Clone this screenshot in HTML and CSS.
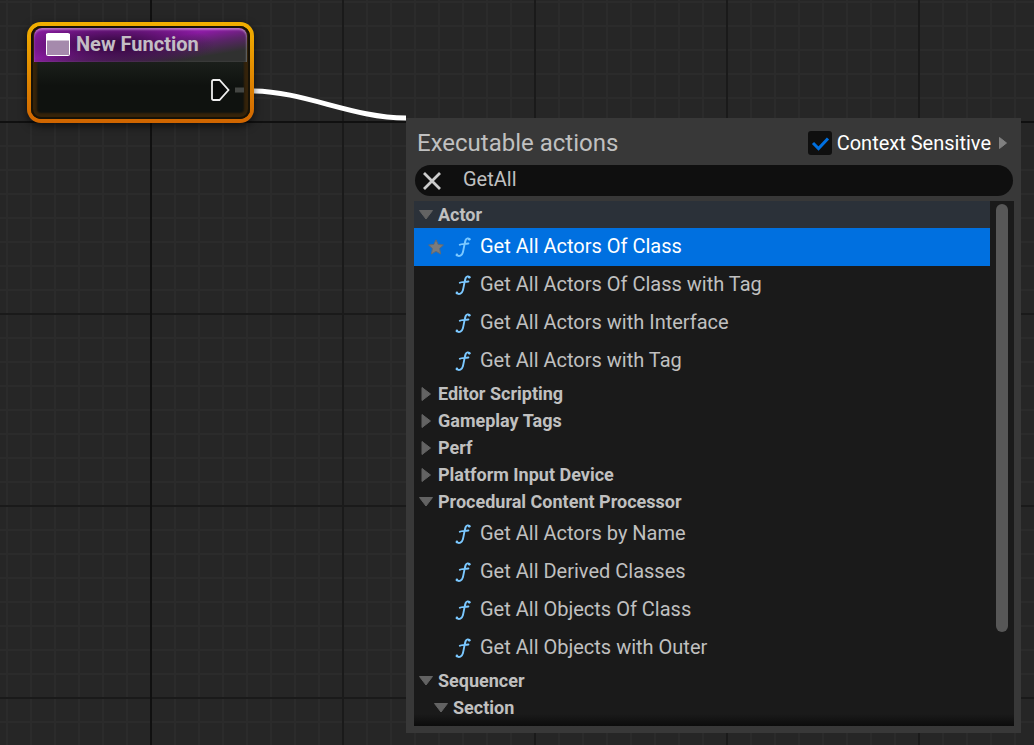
FILE: index.html
```html
<!DOCTYPE html>
<html lang="en">
<head>
<meta charset="utf-8">
<title>Blueprint Graph</title>
<link rel="stylesheet" href="styles.css">
</head>
<body>
<svg class="defs" aria-hidden="true">
  <symbol id="fn" viewBox="0 0 16 22">
    <path d="M14.500 3.2C13.400 1.900 11.500 2.200 10.700 4C9.600 6.500 8.900 12.500 7.900 16.200C7 19.500 4.200 20.800 1.800 19.300M4.800 8.800C6.500 7.700 9 8.100 13.400 7.500" fill="none" stroke="currentColor" stroke-width="1.900" stroke-linecap="round"/>
    <circle cx="14.2" cy="3.2" r="1.3" fill="currentColor"/>
    <circle cx="1.9" cy="18.9" r="1.3" fill="currentColor"/>
  </symbol>
  <symbol id="open" viewBox="0 0 16 12">
    <path d="M1.500 1.500H14.500L8 10Z" fill="currentColor" stroke="currentColor" stroke-linejoin="round"/>
  </symbol>
  <symbol id="closed" viewBox="0 0 16 16">
    <path d="M4 1.500V14.500L12.500 8Z" fill="currentColor" stroke="currentColor" stroke-linejoin="round"/>
  </symbol>
</svg>
<main class="graph">
  <svg class="wire" width="154" height="36" viewBox="0 0 154 36" aria-hidden="true">
    <path d="M0 5C52 5 100 32 154 32" fill="none" stroke="#fff" stroke-width="5"/>
  </svg>
  <article class="node">
    <div class="node-body">
      <header class="node-title">
        <svg width="24" height="23" viewBox="0 0 24 23" aria-hidden="true">
          <rect x="0.5" y="0.5" width="23" height="22" rx="1" fill="#a58aac" stroke="#fff"/>
          <path d="M0 1H24V7.500H0Z" fill="#fff"/>
        </svg>
        <h1>New Function</h1>
      </header>
      <div class="pins">
        <svg width="36" height="24" viewBox="0 0 36 24" aria-hidden="true">
          <path d="M2 3.500Q2 2 3.500 2H9.500L18.500 12L9.500 22H3.500Q2 22 2 20.500Z" fill="#080a09" stroke="#eee" stroke-width="1.800"/>
          <path d="M25 9.500H34V14.500H25Z" fill="#444643"/>
        </svg>
      </div>
    </div>
  </article>

  <section class="menu">
    <header class="menu-head">
      <h2>Executable actions</h2>
      <label class="context">
        <span class="check">
          <input type="checkbox" checked>
          <svg width="24" height="24" viewBox="0 0 24 24" aria-hidden="true"><path d="M5 12L10.500 17.500L20 7.500" fill="none" stroke="#0070e0" stroke-width="3"/></svg>
        </span>
        Context Sensitive
      </label>
      <button class="more" type="button" aria-label="Context options">
        <svg width="10" height="14" viewBox="0 0 10 14" aria-hidden="true"><path d="M1.500 1.500V12.500L8.500 7Z" fill="#808080" stroke="#808080" stroke-linejoin="round"/></svg>
      </button>
    </header>
    <div class="search">
      <button type="button" aria-label="Clear search">
        <svg width="20" height="20" viewBox="0 0 20 20" aria-hidden="true"><path d="M2 2L18 18M18 2L2 18" stroke="#ccc" stroke-width="2.800"/></svg>
      </button>
      <input type="text" value="GetAll" aria-label="Search actions">
    </div>
    <div class="results">
      <div class="tree">
        <button class="category current" type="button"><svg><use href="#open"/></svg>Actor</button>
        <button class="action selected" type="button">
          <svg class="star" viewBox="0 0 16 16" aria-hidden="true"><path d="M8 0.800L10.200 5.400L15.400 6L11.600 9.500L12.600 15L8 12.300L3.400 15L4.400 9.500L0.600 6L5.800 5.400Z" fill="#7b7b7b" stroke="#5f6b78" stroke-linejoin="round"/></svg>
          <svg class="fn"><use href="#fn"/></svg>Get All Actors Of Class</button>
        <button class="action" type="button"><svg class="fn"><use href="#fn"/></svg>Get All Actors Of Class with Tag</button>
        <button class="action" type="button"><svg class="fn"><use href="#fn"/></svg>Get All Actors with Interface</button>
        <button class="action" type="button"><svg class="fn"><use href="#fn"/></svg>Get All Actors with Tag</button>
        <button class="category" type="button"><svg><use href="#closed"/></svg>Editor Scripting</button>
        <button class="category" type="button"><svg><use href="#closed"/></svg>Gameplay Tags</button>
        <button class="category" type="button"><svg><use href="#closed"/></svg>Perf</button>
        <button class="category" type="button"><svg><use href="#closed"/></svg>Platform Input Device</button>
        <button class="category" type="button"><svg><use href="#open"/></svg>Procedural Content Processor</button>
        <button class="action" type="button"><svg class="fn"><use href="#fn"/></svg>Get All Actors by Name</button>
        <button class="action" type="button"><svg class="fn"><use href="#fn"/></svg>Get All Derived Classes</button>
        <button class="action" type="button"><svg class="fn"><use href="#fn"/></svg>Get All Objects Of Class</button>
        <button class="action" type="button"><svg class="fn"><use href="#fn"/></svg>Get All Objects with Outer</button>
        <button class="category" type="button"><svg><use href="#open"/></svg>Sequencer</button>
        <button class="category nested" type="button"><svg><use href="#open"/></svg>Section</button>
      </div>
      <div class="scrollbar"><div class="thumb"></div></div>
    </div>
  </section>
</main>
</body>
</html>
```
FILE: styles.css
```css
* { box-sizing: border-box; }

body {
  margin: 0;
  font-family: Roboto, "Liberation Sans", sans-serif;
  color: #c0c0c0;
}

h1, h2 { margin: 0; }

svg { display: block; flex: none; }

button, input {
  font: inherit;
  color: inherit;
  border: 0;
  padding: 0;
  margin: 0;
  background: none;
}

.defs { position: absolute; width: 0; height: 0; }

.graph {
  position: relative;
  min-height: 100vh;
  overflow: hidden;
  background-color: #262626;
  background-image:
    linear-gradient(90deg, #101010 2px, transparent 2px),
    linear-gradient(#101010 2px, transparent 2px),
    linear-gradient(90deg, #1a1a1a 2px, transparent 2px),
    linear-gradient(#1a1a1a 2px, transparent 2px),
    linear-gradient(90deg, #2b2b2b 2px, transparent 2px),
    linear-gradient(#2b2b2b 2px, transparent 2px);
  background-size: 2px 100%, 100% 2px, 192px 192px, 192px 192px, 24px 24px, 24px 24px;
  background-position: 150px 0, 0 121px, 150px 121px, 150px 121px, 6px 1px, 6px 1px;
  background-repeat: no-repeat, no-repeat, repeat, repeat, repeat, repeat;
}

.wire { position: absolute; left: 252px; top: 86px; }

.node {
  position: absolute;
  left: 27px;
  top: 22px;
  width: 227px;
  padding: 4px;
  border-radius: 14px;
  background: linear-gradient(#f2b000, #d06500);
  box-shadow: 0 3px 8px #0009;
}

.node-body {
  height: 93px;
  padding: 2px 3px;
  border-radius: 10px;
  background: linear-gradient(#1c201c 34px, #0f120f 60px);
  box-shadow: inset 0 0 0 2px #171207, inset 0 0 2px 6px #35230a;
  overflow: hidden;
}

.node-title {
  display: flex;
  align-items: center;
  gap: 6px;
  height: 34px;
  padding: 0 12px 1px;
  border-radius: 8px 8px 0 0;
  background:
    radial-gradient(ellipse 100px 24px at 38% 50%, #380a44 15%, transparent),
    linear-gradient(to bottom right, #8c1ba4 45%, #5a2468 62%, #303130 82%);
  box-shadow: inset 0 2px 2px #ffffff58, inset -1px 0 2px #ffffff30;
}

.node-title h1 {
  padding-bottom: 1px;
  font-size: 20px;
  line-height: 24px;
  font-weight: 700;
  color: #c3bdc4;
}

.pins {
  display: flex;
  justify-content: flex-end;
  padding: 16px 1px 0;
}

.menu {
  position: absolute;
  left: 406px;
  right: 13px;
  top: 118px;
  padding: 8px 7px 7px 8px;
  background: #383838;
}

.menu-head {
  display: flex;
  align-items: center;
  height: 33px;
  padding: 0 6px 0 3px;
}

.menu-head h2 {
  flex: 1;
  font-size: 24px;
  line-height: 32px;
  font-weight: 400;
}

.context {
  display: flex;
  align-items: center;
  gap: 5px;
  font-size: 20px;
  line-height: 24px;
  color: #fff;
}

.check { position: relative; }

.check input {
  display: block;
  appearance: none;
  width: 24px;
  height: 24px;
  border-radius: 3px;
  background: #0f0f0f;
}

.check svg { position: absolute; inset: 0; pointer-events: none; }

.more { margin-left: 7px; }

.search {
  display: flex;
  align-items: center;
  gap: 21px;
  height: 31px;
  margin: 6px 1px 5px;
  padding: 0 7px;
  border-radius: 16px;
  background: #0f0f0f;
}

.search input {
  flex: 1;
  min-width: 0;
  padding-bottom: 3px;
  font-size: 20px;
  outline: 0;
}

.results {
  display: flex;
  background: linear-gradient(transparent calc(100% - 12px), #0c0c0c), #1a1a1a;
}

.tree { flex: 1; min-width: 0; padding-bottom: 5px; }

.category, .action {
  display: flex;
  align-items: center;
  width: 100%;
  text-align: left;
  white-space: nowrap;
}

.category {
  gap: 4px;
  height: 27px;
  padding-left: 4px;
  font-size: 18px;
  font-weight: 700;
}

.category svg { width: 16px; height: 16px; color: #636363; }

.nested { padding-left: 19px; }

.current { background: #2b3139; }

.action {
  position: relative;
  gap: 9px;
  height: 38px;
  padding: 0 0 2px 41px;
  font-size: 20px;
}

.selected { background: #0070e0; color: #fff; }

.fn { width: 16px; height: 22px; margin-top: 2px; color: #7bc8ff; }

.star { position: absolute; left: 14px; top: 11px; width: 16px; height: 16px; }

.scrollbar { width: 24px; padding: 3px 6px; }

.thumb { height: 82.5%; border-radius: 6px; background: #575757; }
```
